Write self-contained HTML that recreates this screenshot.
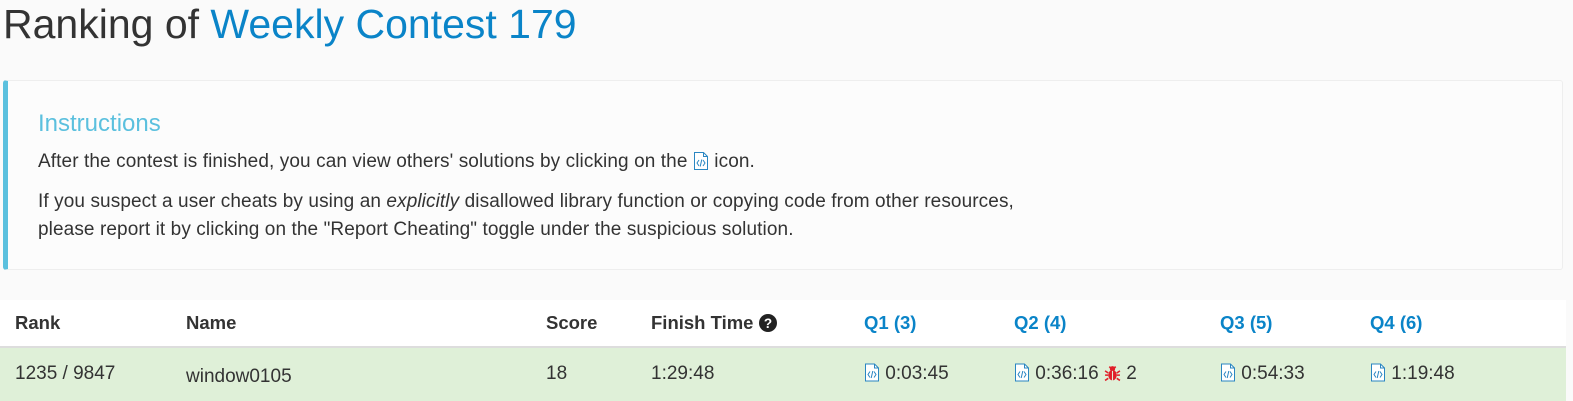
<!DOCTYPE html>
<html><head><meta charset="utf-8"><style>
body{margin:0;background:#fafafa;font-family:"Liberation Sans",Arial,sans-serif;color:#333;width:1573px;height:401px;overflow:hidden;position:relative}
h1{position:absolute;left:3px;top:0;margin:0;font-weight:400;font-size:41px;line-height:48px;color:#333}
h1 span{color:#0a84c8}
.box{position:absolute;left:3px;top:80px;width:1560px;height:190px;background:#fcfcfc;border:1px solid #eee;border-left:5px solid #5bc0de;border-radius:3px;box-sizing:border-box}
.box h4{position:absolute;left:30px;top:29px;margin:0;font-weight:400;font-size:24px;color:#5bc0de}
.box p{position:absolute;left:30px;margin:0;font-size:19px;line-height:28px;letter-spacing:0.1px}
.ic{display:inline-block;vertical-align:-3px}
.th{position:absolute;top:300px;left:0;width:1566px;height:46px;background:#fff}
.row{position:absolute;top:346px;left:0;width:1566px;height:55px;background:#dff0d8;border-top:2px solid #ddd;box-sizing:border-box}
.c{position:absolute;font-size:19px;line-height:24px;white-space:nowrap}
.h{font-weight:bold;top:311px;font-size:18.5px}
.b{top:362px}
.q{color:#0a84c8}
</style></head><body>
<h1>Ranking of <span>Weekly Contest 179</span></h1>
<div class="box">
<h4>Instructions</h4>
<p style="top:67px">After the contest is finished, you can view others' solutions by clicking on the <svg class="ic" width="16" height="18" viewBox="0 0 16 18"><path d="M1.5 0.5h9l4 4v13h-13z" fill="#fff" stroke="#2a86c2"/><path d="M10.5 0.5v4h4" fill="none" stroke="#2a86c2"/><path d="M6 8l-2 3 2 3M10 8l2 3-2 3M8.8 7.5l-1.6 7" fill="none" stroke="#2a86c2" stroke-width="1"/></svg> icon.</p>
<p style="top:107px">If you suspect a user cheats by using an <i>explicitly</i> disallowed library function or copying code from other resources,<br>please report it by clicking on the "Report Cheating" toggle under the suspicious solution.</p>
</div>
<div class="th"></div><div class="row"></div>
<div class="c h" style="left:15px">Rank</div>
<div class="c h" style="left:186px">Name</div>
<div class="c h" style="left:546px">Score</div>
<div class="c h" style="left:651px">Finish Time <svg class="ic" width="18" height="18" viewBox="0 0 16 16"><circle cx="8" cy="8" r="8" fill="#222"/><text x="8" y="12.5" font-size="12" font-weight="bold" fill="#fff" text-anchor="middle" font-family="Liberation Sans">?</text></svg></div>
<div class="c h q" style="left:864px">Q1 (3)</div>
<div class="c h q" style="left:1014px">Q2 (4)</div>
<div class="c h q" style="left:1220px">Q3 (5)</div>
<div class="c h q" style="left:1370px">Q4 (6)</div>
<div class="c b" style="left:15px">1235 / 9847</div>
<div class="c b" style="left:186px;top:365px">window0105</div>
<div class="c b" style="left:546px">18</div>
<div class="c b" style="left:651px">1:29:48</div>
<div class="c b" style="left:864px"><svg class="ic" width="16" height="19" viewBox="0 0 16 18"><path d="M1.5 0.5h9l4 4v13h-13z" fill="#fff" stroke="#2a86c2"/><path d="M10.5 0.5v4h4" fill="none" stroke="#2a86c2"/><path d="M6 8l-2 3 2 3M10 8l2 3-2 3M8.8 7.5l-1.6 7" fill="none" stroke="#2a86c2"/></svg> 0:03:45</div>
<div class="c b" style="left:1014px"><svg class="ic" width="16" height="19" viewBox="0 0 16 18"><path d="M1.5 0.5h9l4 4v13h-13z" fill="#fff" stroke="#2a86c2"/><path d="M10.5 0.5v4h4" fill="none" stroke="#2a86c2"/><path d="M6 8l-2 3 2 3M10 8l2 3-2 3M8.8 7.5l-1.6 7" fill="none" stroke="#2a86c2"/></svg> 0:36:16 <svg class="ic" width="17" height="18" viewBox="0 0 16 16"><ellipse cx="8" cy="10" rx="4" ry="5" fill="#e0202a"/><circle cx="8" cy="4" r="2.5" fill="#e0202a"/><path d="M1 6l3 2M15 6l-3 2M1 10h3M15 10h-3M1 15l3-2M15 15l-3-2M5 2l1.5 1.5M11 2l-1.5 1.5" stroke="#e0202a" stroke-width="1.5"/><path d="M8 6v9" stroke="#dff0d8" stroke-width="1"/></svg> 2</div>
<div class="c b" style="left:1220px"><svg class="ic" width="16" height="19" viewBox="0 0 16 18"><path d="M1.5 0.5h9l4 4v13h-13z" fill="#fff" stroke="#2a86c2"/><path d="M10.5 0.5v4h4" fill="none" stroke="#2a86c2"/><path d="M6 8l-2 3 2 3M10 8l2 3-2 3M8.8 7.5l-1.6 7" fill="none" stroke="#2a86c2"/></svg> 0:54:33</div>
<div class="c b" style="left:1370px"><svg class="ic" width="16" height="19" viewBox="0 0 16 18"><path d="M1.5 0.5h9l4 4v13h-13z" fill="#fff" stroke="#2a86c2"/><path d="M10.5 0.5v4h4" fill="none" stroke="#2a86c2"/><path d="M6 8l-2 3 2 3M10 8l2 3-2 3M8.8 7.5l-1.6 7" fill="none" stroke="#2a86c2"/></svg> 1:19:48</div>
</body></html>
